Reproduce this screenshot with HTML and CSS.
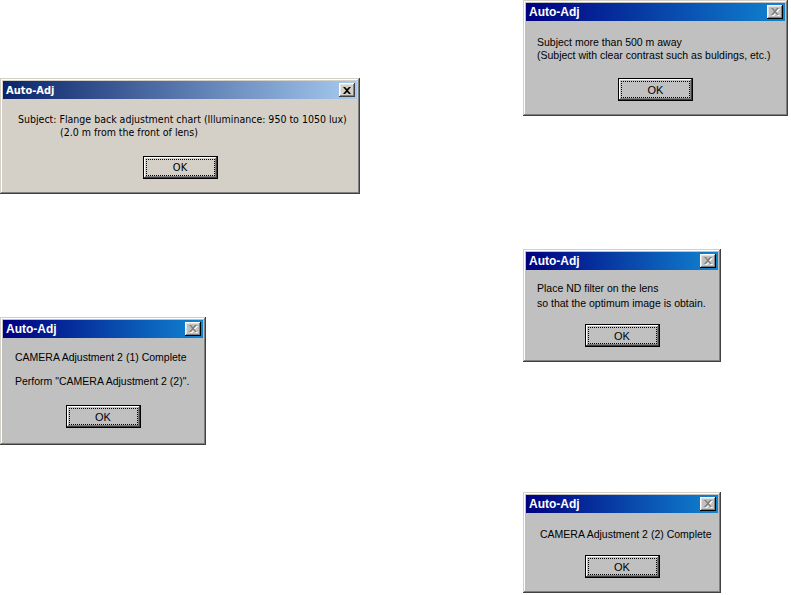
FILE: index.html
```html
<!DOCTYPE html>
<html lang="en">
<head>
    <meta charset="UTF-8">
    <title>Auto-Adj dialogs</title>
    <link rel="stylesheet" href="styles.css">
</head>
<body>

    <div class="desk">

        <!-- Windows 2000 style dialog -->
        <div class="win w2k d-flange">
            <div class="title">
                <span>Auto-Adj</span>
                <span class="close">
                    <svg width="8" height="7" viewBox="0 0 8 7"><path d="M0 0h2l2 2 2-2h2L5 3.5 8 7H6L4 5 2 7H0l3-3.5z" fill="#000"/></svg>
                </span>
            </div>
            <div class="body">
                <p class="msg">Subject: Flange back adjustment chart (Illuminance: 950 to 1050 lux)<br><span class="indent">(2.0 m from the front of lens)</span></p>
                <div class="actions"><button class="ok"><span>OK</span></button></div>
            </div>
        </div>

        <div class="win w98 d-adj1">
            <div class="title">
                <span>Auto-Adj</span>
                <span class="close off">
                    <svg width="9" height="8" viewBox="0 0 9 8"><path d="M1 1h2l2 2 2-2h2L6 4.5 9 8H7L5 6 3 8H1l3-3.5z" fill="#fff"/><path d="M0 0h2l2 2 2-2h2L5 3.5 8 7H6L4 5 2 7H0l3-3.5z" fill="#808080"/></svg>
                </span>
            </div>
            <div class="body">
                <p class="msg">CAMERA Adjustment 2 (1) Complete</p>
                <p class="msg second">Perform "CAMERA Adjustment 2 (2)".</p>
                <div class="actions"><button class="ok"><span>OK</span></button></div>
            </div>
        </div>

        <div class="win w98 d-far">
            <div class="title">
                <span>Auto-Adj</span>
                <span class="close off">
                    <svg width="9" height="8" viewBox="0 0 9 8"><path d="M1 1h2l2 2 2-2h2L6 4.5 9 8H7L5 6 3 8H1l3-3.5z" fill="#fff"/><path d="M0 0h2l2 2 2-2h2L5 3.5 8 7H6L4 5 2 7H0l3-3.5z" fill="#808080"/></svg>
                </span>
            </div>
            <div class="body">
                <p class="msg">Subject more than 500 m away<br>(Subject with clear contrast such as buldings, etc.)</p>
                <div class="actions"><button class="ok"><span>OK</span></button></div>
            </div>
        </div>

        <div class="win w98 d-nd">
            <div class="title">
                <span>Auto-Adj</span>
                <span class="close off">
                    <svg width="9" height="8" viewBox="0 0 9 8"><path d="M1 1h2l2 2 2-2h2L6 4.5 9 8H7L5 6 3 8H1l3-3.5z" fill="#fff"/><path d="M0 0h2l2 2 2-2h2L5 3.5 8 7H6L4 5 2 7H0l3-3.5z" fill="#808080"/></svg>
                </span>
            </div>
            <div class="body">
                <p class="msg">Place ND filter on the lens<br>so that the optimum image is obtain.</p>
                <div class="actions"><button class="ok"><span>OK</span></button></div>
            </div>
        </div>

        <div class="win w98 d-adj2">
            <div class="title">
                <span>Auto-Adj</span>
                <span class="close off">
                    <svg width="9" height="8" viewBox="0 0 9 8"><path d="M1 1h2l2 2 2-2h2L6 4.5 9 8H7L5 6 3 8H1l3-3.5z" fill="#fff"/><path d="M0 0h2l2 2 2-2h2L5 3.5 8 7H6L4 5 2 7H0l3-3.5z" fill="#808080"/></svg>
                </span>
            </div>
            <div class="body">
                <p class="msg">CAMERA Adjustment 2 (2) Complete</p>
                <div class="actions"><button class="ok"><span>OK</span></button></div>
            </div>
        </div>

    </div>

</body>
</html>
```

FILE: styles.css
```css
body {
    margin: 0;
    background-color: #ffffff;
    font-family: "Liberation Sans", Arial, sans-serif;
}

.desk {
    position: relative;
    width: 791px;
    height: 595px;
    overflow: hidden;
}

/* each dialog sits where it was captured */
.win {
    position: absolute;
    box-sizing: border-box;
    padding: 3px;
    display: flex;
    flex-direction: column;
    box-shadow: inset -1px -1px #404040, inset 1px 1px #d4d0c8, inset -2px -2px #808080, inset 2px 2px #ffffff;
}

.title {
    height: 18px;
    display: flex;
    align-items: center;
    justify-content: space-between;
    padding: 0 2px 0 3px;
    color: #fff;
    font-weight: bold;
}

.close {
    width: 16px;
    height: 14px;
    box-sizing: border-box;
    display: flex;
    align-items: center;
    justify-content: center;
    box-shadow: inset -1px -1px #404040, inset 1px 1px #ffffff, inset -2px -2px #808080, inset 2px 2px #e8e6e0;
}

.close svg {
    display: block;
}

.body {
    flex: 1;
    display: flex;
    flex-direction: column;
    color: #000;
}

.msg {
    margin: 0;
    white-space: nowrap;
}

.actions {
    display: flex;
    justify-content: center;
}

.ok {
    width: 75px;
    height: 23px;
    padding: 3px;
    border: none;
    font: inherit;
    font-size: 11px;
    color: #000;
    background: inherit;
    box-shadow: inset 0 0 0 1px #000, inset -2px -2px #404040, inset 2px 2px #ffffff, inset -3px -3px #808080;
}

.ok span {
    display: flex;
    align-items: center;
    justify-content: center;
    height: 100%;
    border: 1px dotted #000;
    box-sizing: border-box;
}

/* Windows 2000 look */
.w2k {
    background-color: #d4d0c8;
    font-family: "DejaVu Sans Condensed", "DejaVu Sans", sans-serif;
    font-size: 10.5px;
}

.w2k .title {
    background: linear-gradient(to right, #0a246a, #a6caf0);
    font-size: 11px;
}

.w2k .close,
.w2k .ok {
    background-color: #d4d0c8;
}

/* Windows 98 look */
.w98 {
    background-color: #c0c0c0;
    font-size: 10.5px;
}

.w98 .title {
    background: linear-gradient(to right, #000080, #1084d0);
    font-size: 12px;
}

.w98 .close {
    background-color: #c0c0c0;
    box-shadow: inset -1px -1px #000, inset 1px 1px #ffffff, inset -2px -2px #808080, inset 2px 2px #dfdfdf;
}

.d-flange {
    left: 0;
    top: 78px;
    width: 360px;
    height: 116px;
}

.d-flange .body {
    padding: 14px 0 0 15px;
}

.d-flange .msg {
    line-height: 13px;
}

.d-flange .indent {
    padding-left: 42px;
}

.d-flange .actions {
    margin: 17px 15px 0 0;
}

.d-adj1 {
    left: 0;
    top: 317px;
    width: 206px;
    height: 128px;
}

.d-adj1 .body {
    padding: 13px 0 0 12px;
}

.d-adj1 .msg.second {
    margin-top: 12px;
}

.d-adj1 .actions {
    margin: 18px 12px 0 0;
}

.d-far {
    left: 523px;
    top: 0;
    width: 265px;
    height: 116px;
}

.d-far .body {
    padding: 15px 0 0 11px;
}

.d-far .msg {
    line-height: 13px;
}

.d-far .actions {
    margin: 16px 11px 0 0;
}

.d-nd {
    left: 523px;
    top: 249px;
    width: 198px;
    height: 113px;
}

.d-nd .body {
    padding: 11px 0 0 11px;
}

.d-nd .msg {
    line-height: 15px;
}

.d-nd .actions {
    margin: 13px 11px 0 0;
}

.d-adj2 {
    left: 523px;
    top: 492px;
    width: 198px;
    height: 101px;
}

.d-adj2 .body {
    padding: 15px 0 0 14px;
}

.d-adj2 .actions {
    margin: 15px 14px 0 0;
}
```
